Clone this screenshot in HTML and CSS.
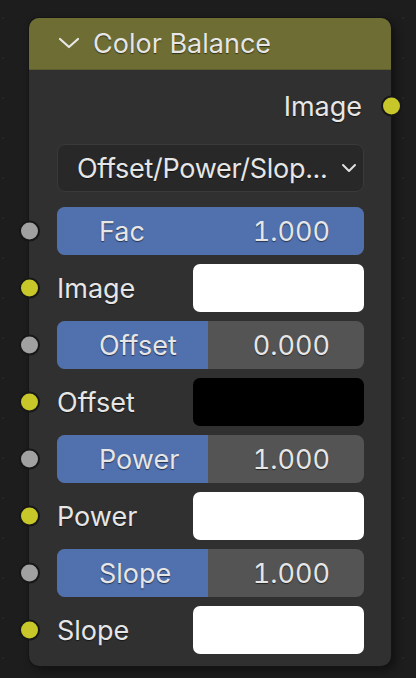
FILE: index.html
```html
<!DOCTYPE html>
<html>
<head>
<meta charset="utf-8">
<link rel="stylesheet" href="styles.css">
</head>
<body>
<div class="canvas">
  <div class="node">
    <div class="header">
      <svg class="chev" width="22" height="12" viewBox="0 0 22 12"><path d="M2 2 L11 10 L20 2" fill="none" stroke="#e8e8e8" stroke-width="2.2" stroke-linecap="round" stroke-linejoin="round"/></svg>
      <span class="title">Color Balance</span>
    </div>
    <div class="body">
      <div class="row out-row">
        <span class="label">Image</span>
        <span class="socket right yellow"></span>
      </div>
      <div class="dropdown">
        <span class="dd-text">Offset/Power/Slop...</span>
        <svg width="16" height="10" viewBox="0 0 16 10"><path d="M2 2 L8 8 L14 2" fill="none" stroke="#e0e0e0" stroke-width="2" stroke-linecap="round" stroke-linejoin="round"/></svg>
      </div>
      <div class="rows">
        <div class="row">
          <span class="socket left grey"></span>
          <div class="slider"><div class="fill" style="width:100%"></div><span class="s-label">Fac</span><span class="s-value">1.000</span></div>
        </div>
        <div class="row">
          <span class="socket left yellow"></span>
          <span class="label">Image</span>
          <span class="swatch white"></span>
        </div>
        <div class="row">
          <span class="socket left grey"></span>
          <div class="slider"><div class="fill" style="width:151px"></div><span class="s-label">Offset</span><span class="s-value">0.000</span></div>
        </div>
        <div class="row">
          <span class="socket left yellow"></span>
          <span class="label">Offset</span>
          <span class="swatch black"></span>
        </div>
        <div class="row">
          <span class="socket left grey"></span>
          <div class="slider"><div class="fill" style="width:151px"></div><span class="s-label">Power</span><span class="s-value">1.000</span></div>
        </div>
        <div class="row">
          <span class="socket left yellow"></span>
          <span class="label">Power</span>
          <span class="swatch white"></span>
        </div>
        <div class="row">
          <span class="socket left grey"></span>
          <div class="slider"><div class="fill" style="width:151px"></div><span class="s-label">Slope</span><span class="s-value">1.000</span></div>
        </div>
        <div class="row">
          <span class="socket left yellow"></span>
          <span class="label">Slope</span>
          <span class="swatch white"></span>
        </div>
      </div>
    </div>
  </div>
</div>
</body>
</html>
```

FILE: styles.css
```css
html, body {
  margin: 0;
  padding: 0;
}
body {
  width: 416px;
  height: 678px;
  overflow: hidden;
  background-color: #1d1d1d;
  background-image: radial-gradient(circle, #262626 1px, transparent 1.5px);
  background-size: 40px 40px;
  background-position: -17px -2px;
  font-family: Inter, "Noto Sans", sans-serif;
  color: #e6e6e6;
}
.canvas {
  padding: 18px 0 0 29px;
}
.node {
  width: 362px;
  height: 648px;
  box-sizing: border-box;
  background: #303030;
  border-radius: 10px;
  box-shadow: 0 0 0 1px #151515, 4px 4px 10px rgba(0,0,0,0.45);
  display: flex;
  flex-direction: column;
}
.header {
  height: 52px;
  flex: none;
  background: #6e6d33;
  border-radius: 10px 10px 0 0;
  border-bottom: 1px solid #5c5b2c;
  box-sizing: border-box;
  display: flex;
  align-items: center;
  padding-left: 29px;
  gap: 13px;
}
.chev { margin-top: -2px; }
.title {
  font-size: 27px;
  text-shadow: 0 1px 1px rgba(0,0,0,0.55);
}
.body {
  padding: 12px 27px 12px 28px;
  display: flex;
  flex-direction: column;
}
.row {
  height: 48px;
  position: relative;
  display: flex;
  align-items: center;
  font-size: 27px;
}
.label {
  text-shadow: 0 1px 1px rgba(0,0,0,0.55);
  flex: 1;
}
.out-row .label {
  text-align: right;
  padding-right: 2px;
}
.socket {
  position: absolute;
  top: 50%;
  width: 17px;
  height: 17px;
  border-radius: 50%;
  border: 2px solid #171717;
  transform: translateY(-50%);
}
.socket.left { left: -38.5px; }
.socket.right { right: -37.5px; }
.yellow { background: #c7c729; }
.grey { background: #a1a1a1; }
.dropdown {
  margin-top: 14px;
  height: 48px;
  box-sizing: border-box;
  background: #282828;
  border: 1px solid #3a3a3a;
  border-radius: 8px;
  display: flex;
  align-items: center;
  justify-content: space-between;
  padding: 0 6px 0 19px;
  font-size: 27px;
  text-shadow: 0 1px 1px rgba(0,0,0,0.55);
}
.dd-text { letter-spacing: -0.3px; }
.rows {
  margin-top: 15px;
  display: flex;
  flex-direction: column;
  gap: 9px;
}
.slider {
  position: relative;
  flex: 1;
  height: 48px;
  background: #545454;
  border-radius: 8px;
  overflow: hidden;
  display: flex;
  align-items: center;
  justify-content: space-between;
  padding: 0 34px 0 42px;
  box-sizing: border-box;
  text-shadow: 0 1px 1px rgba(0,0,0,0.55);
}
.fill {
  position: absolute;
  left: 0;
  top: 0;
  bottom: 0;
  background: #5070ae;
}
.s-label, .s-value { position: relative; }
.s-value { font-variant-numeric: tabular-nums; }
.swatch {
  width: 171px;
  height: 48px;
  border-radius: 7px;
  flex: none;
}
.white { background: #ffffff; }
.black { background: #000000; }
```
